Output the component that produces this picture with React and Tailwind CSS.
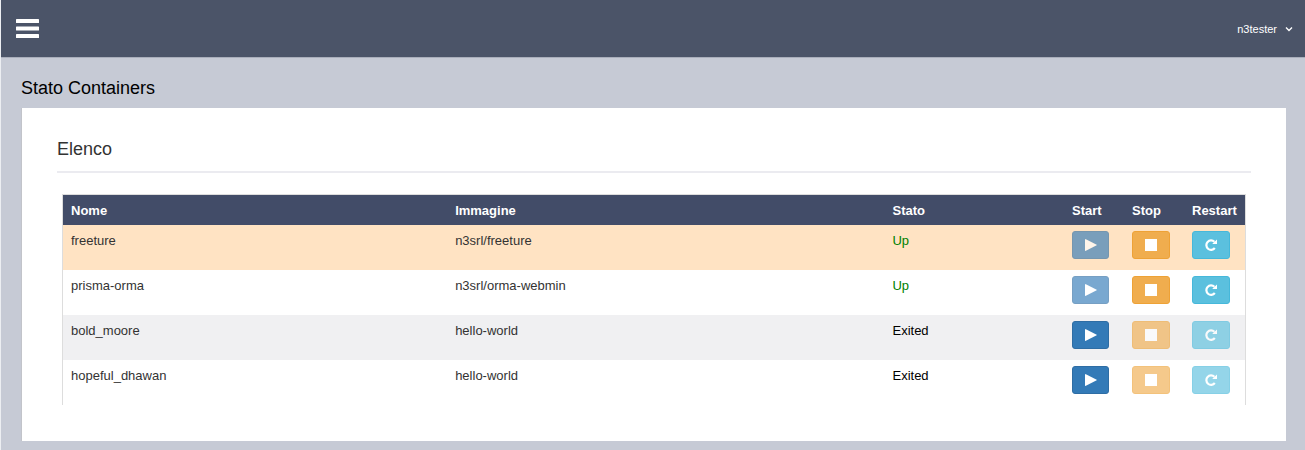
const containers = [
  { name: 'freeture', image: 'n3srl/freeture', up: true },
  { name: 'prisma-orma', image: 'n3srl/orma-webmin', up: true },
  { name: 'bold_moore', image: 'hello-world', up: false },
  { name: 'hopeful_dhawan', image: 'hello-world', up: false },
];

const rowColors = ['bg-[#ffe3c3]', 'bg-white', 'bg-[#f0f0f2]', 'bg-white'];

const actionBase =
  'flex h-7 items-center justify-center rounded-[3px] border text-white disabled:opacity-65';

function PlayIcon() {
  return (
    <svg viewBox="0 0 12 12" className="size-3" fill="currentColor" aria-hidden="true">
      <path d="M0 0.4Q0 0 0.4 0.1L11.7 5.7Q12 6 11.7 6.3L0.4 11.9Q0 12 0 11.6Z" />
    </svg>
  );
}

function StopIcon() {
  return (
    <svg viewBox="0 0 12 12" className="size-3" fill="currentColor" aria-hidden="true">
      <path d="M0 0H12V12H0Z" />
    </svg>
  );
}

function RepeatIcon() {
  return (
    <svg viewBox="0 0 12 12" className="size-3" fill="none" aria-hidden="true">
      <path d="M9.4 2.8A4.7 4.7 0 1 0 9.8 9" stroke="currentColor" strokeWidth="2.2" />
      <path d="M12 0.4V5H7.2Z" fill="currentColor" />
    </svg>
  );
}

function MenuIcon() {
  return (
    <svg viewBox="0 0 23 19" className="h-[19px] w-[23px]" fill="currentColor" aria-hidden="true">
      <rect width="23" height="4" rx="0.6" />
      <rect y="7.5" width="23" height="4" rx="0.6" />
      <rect y="15" width="23" height="4" rx="0.6" />
    </svg>
  );
}

function ChevronIcon() {
  return (
    <svg viewBox="0 0 8 8" className="size-2" fill="none" stroke="currentColor" strokeWidth="1.4" aria-hidden="true">
      <path d="M1 2.4L4 5.4L7 2.4" />
    </svg>
  );
}

export default function App() {
  return (
    <div className="min-h-screen border-l border-[#eceef2] bg-[#c6cad5] font-['Liberation_Sans',Arial,sans-serif] text-[13px] leading-[18px] text-[#333]">
      <header className="flex h-[58px] items-center justify-between border-b border-[#a9aebb] bg-[#4b5468] pr-3 pl-[15px] text-white">
        <button type="button" aria-label="Menu">
          <MenuIcon />
        </button>
        <button type="button" className="flex items-center gap-2 text-[11px]">
          n3tester
          <ChevronIcon />
        </button>
      </header>
      <main className="pt-5 pr-[19px] pl-5">
        <h1 className="text-lg leading-5 text-black">Stato Containers</h1>
        <section className="mt-[10px] border-l border-[#c2c4ca] bg-white px-[35px] pt-[30px] pb-9">
          <h2 className="border-b-2 border-[#ebebf0] pb-[11px] text-lg leading-[22px]">Elenco</h2>
          <div className="mx-[5px] mt-[21px] border border-b-0 border-[#ddd]">
            <table className="w-full table-fixed border-collapse text-left">
              <colgroup>
                <col className="w-[32.5%]" />
                <col className="w-[37%]" />
                <col />
                <col className="w-[60px]" />
                <col className="w-[60px]" />
                <col className="w-[61px]" />
              </colgroup>
              <thead className="bg-[#424c68] text-white">
                <tr className="h-[30px]">
                  {['Nome', 'Immagine', 'Stato', 'Start', 'Stop', 'Restart'].map((label) => (
                    <th key={label} scope="col" className="pt-0.5 pl-2 font-bold">
                      {label}
                    </th>
                  ))}
                </tr>
              </thead>
              <tbody>
                {containers.map(({ name, image, up }, i) => (
                  <tr key={name} className={`h-[45px] align-top ${rowColors[i]}`}>
                    <td className="pt-[7px] pl-2">{name}</td>
                    <td className="pt-[7px] pl-2">{image}</td>
                    <td className={`pt-[7px] pl-2 ${up ? 'text-[green]' : 'text-black'}`}>
                      {up ? 'Up' : 'Exited'}
                    </td>
                    <td className="pt-[6px] pl-2">
                      <button type="button" disabled={up} aria-label={`Start ${name}`} className={`${actionBase} w-[37px] border-[#2e6da4] bg-[#337ab7]`}>
                        <PlayIcon />
                      </button>
                    </td>
                    <td className="pt-[6px] pl-2">
                      <button type="button" disabled={!up} aria-label={`Stop ${name}`} className={`${actionBase} w-[38px] border-[#eea236] bg-[#f0ad4e]`}>
                        <StopIcon />
                      </button>
                    </td>
                    <td className="pt-[6px] pl-2">
                      <button type="button" disabled={!up} aria-label={`Restart ${name}`} className={`${actionBase} w-[38px] border-[#46b8da] bg-[#5bc0de]`}>
                        <RepeatIcon />
                      </button>
                    </td>
                  </tr>
                ))}
              </tbody>
            </table>
          </div>
        </section>
      </main>
    </div>
  );
}
